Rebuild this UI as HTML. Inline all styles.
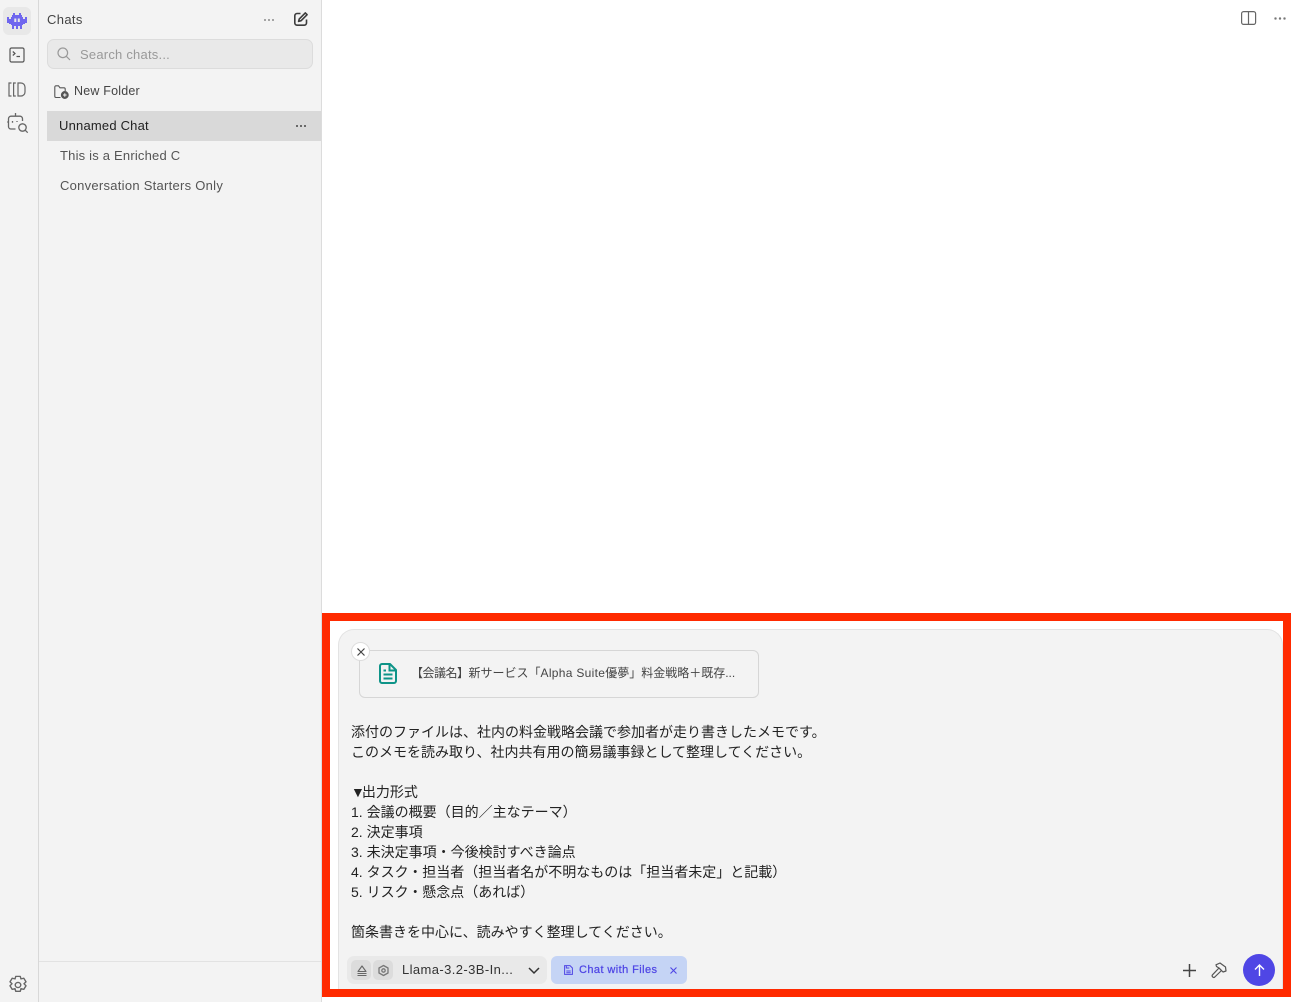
<!DOCTYPE html>
<html lang="ja"><head><meta charset="utf-8"><title>Chats</title>
<style>
html,body{margin:0;padding:0;width:1294px;height:1002px;overflow:hidden;background:#fff;font-family:"Liberation Sans","Noto Sans CJK JP",sans-serif;color:#333}
.a{position:absolute;white-space:nowrap}
svg{position:absolute;overflow:visible;fill:none}
</style></head><body>
<div class="a" style="left:0;top:0;width:38px;height:1002px;background:#f3f3f3;border-right:1px solid #d8d8d8"></div>
<div class="a" style="left:39px;top:0;width:282px;height:1002px;background:#f3f3f3;border-right:1px solid #dcdcdc"></div>
<div class="a" style="left:39px;top:961px;width:282px;height:1px;background:#e2e2e2"></div>

<div class="a" style="left:3px;top:7px;width:28px;height:28px;border-radius:6px;background:#e8e8e8"></div>
<svg style="left:7px;top:13px" width="20" height="17" viewBox="0 0 20 17"><path fill="#6f66ee" fill-rule="evenodd" d="M6 0h2v2h4V0h2v2h1v2h1v2h2V4h2v6h-2v1h-2v1h-1v4h-2v-3h-2v3H9v-3H7v3H5v-4H4v-1H2v-1H0V4h2v2h2V4h1V2h1zM7.300 5.500v3.500h2V5.500zM10.800 5.500v3.500h2V5.500z"/></svg>
<svg style="left:9px;top:47px" width="16" height="16" viewBox="0 0 16 16" stroke="#555" stroke-width="1.200"><rect x="1" y="1" width="14" height="14" rx="1.500"/><path d="M3.800 4.500 6 6.500 3.800 8.500M7.500 9.500H11"/></svg>
<svg style="left:8px;top:82px" width="18" height="15" viewBox="0 0 18 15" stroke="#666" stroke-width="1.200"><path d="M3.500 1H1v13h2.500M7.800 1H5.600v13h2.200M10 1h3a4 4 0 0 1 4 4v5a4 4 0 0 1-4 4h-3z"/></svg>
<svg style="left:7px;top:113px" width="21" height="20" viewBox="0 0 21 20" stroke="#666" stroke-width="1.300"><path d="M8.500 0v3.200M8.500 16H4a2.500 2.500 0 0 1-2.500-2.500V5.700A2.500 2.500 0 0 1 4 3.200h9a2.500 2.500 0 0 1 2.500 2.500V8"/><path d="M1.500 9H.2M5.500 8v1.800M10 8v1"/><circle cx="15.500" cy="14.500" r="3.700"/><path d="m18.200 17.200 2.500 2.500"/></svg>
<svg style="left:8.500px;top:976px" width="18" height="18" viewBox="0 0 18 18" stroke="#666" stroke-width="1.150"><g transform="translate(9 9) scale(1.250 1.150) translate(-9 -9)"><path d="M7.200 1.500h3.600l.6 2.200 2.200-.6 1.800 3.100-1.600 1.700 1.600 1.800-1.800 3.100-2.200-.6-.6 2.300H7.200l-.6-2.300-2.200.6-1.800-3.100 1.600-1.800-1.600-1.700 1.800-3.100 2.200.6z" stroke-linejoin="round"/><circle cx="9" cy="9" r="2.200"/></g></svg>

<div class="a" style="left:47px;top:12px;font-size:13px;line-height:16px;color:#444;letter-spacing:.35px">Chats</div>
<div class="a" style="left:264px;top:19px;width:11px;height:2px;background:radial-gradient(circle at 1px 1px,#8a8a8a 1px,transparent 1px) 0 0/4px 2px"></div>
<svg style="left:294px;top:12px" width="14" height="14" viewBox="0 0 14 14" stroke="#3c3c3c" stroke-width="1.600"><path d="M6.500 1.500H3A2.200 2.200 0 0 0 .8 3.700V11A2.200 2.200 0 0 0 3 13.200h7.300a2.200 2.200 0 0 0 2.200-2.200V7.500"/><path d="m11.300 .9 1.800 1.800-6 6-2.500.7.700-2.500z" stroke-linejoin="round"/></svg>

<div class="a" style="left:47px;top:39px;width:264px;height:28px;background:#e9e9e9;border:1px solid #dcdcdc;border-radius:7px"></div>
<svg style="left:57px;top:47px" width="14" height="14" viewBox="0 0 14 14" stroke="#999" stroke-width="1.200"><circle cx="5.800" cy="5.800" r="4.800"/><path d="m9.300 9.300 3.700 3.700"/></svg>
<div class="a" style="left:80px;top:47px;font-size:13px;line-height:16px;color:#999;letter-spacing:.22px">Search chats...</div>

<svg style="left:54px;top:85px" width="15" height="14" viewBox="0 0 15 14" stroke="#555" stroke-width="1.100"><path d="M6.500 12.500H2A1.200 1.200 0 0 1 .8 11.300V2A1.200 1.200 0 0 1 2 .8h2.500l1.500 2h4A1.200 1.200 0 0 1 11.200 4v2"/><circle cx="10.800" cy="10" r="3.400" fill="#555"/><path d="M9 10h3.600M10.800 8.200v3.600" stroke="#f3f3f3" stroke-width="1"/></svg>
<div class="a" style="left:74px;top:83px;font-size:12.500px;line-height:16px;color:#444;letter-spacing:.2px">New Folder</div>

<div class="a" style="left:47px;top:111px;width:274px;height:30px;background:#d9d9d9"></div>
<div class="a" style="left:59px;top:117px;font-size:13px;line-height:17px;color:#222;letter-spacing:.2px">Unnamed Chat</div>
<div class="a" style="left:296px;top:125px;width:11px;height:2px;background:radial-gradient(circle at 1px 1px,#444 1px,transparent 1px) 0 0/4px 2px"></div>
<div class="a" style="left:60px;top:147px;font-size:13px;line-height:17px;color:#555;letter-spacing:.2px">This is a Enriched C</div>
<div class="a" style="left:60px;top:177px;font-size:13px;line-height:17px;color:#555;letter-spacing:.27px">Conversation Starters Only</div>

<svg style="left:1241px;top:11px" width="15" height="14" viewBox="0 0 15 14" stroke="#666" stroke-width="1.200"><rect x=".6" y=".6" width="14" height="12.800" rx="2"/><path d="M7.500 .6v12.800"/></svg>
<div class="a" style="left:1274px;top:17px;width:12px;height:3px;background:radial-gradient(circle at 1.500px 1.500px,#777 1.200px,transparent 1.300px) 0 0/4.500px 3px"></div>

<div class="a" style="left:338px;top:629px;width:945px;height:362px;box-sizing:border-box;background:#f3f3f3;border:1px solid #e3e3e3;border-bottom:0;border-radius:16px 16px 0 0"></div>
<div class="a" style="left:322px;top:613px;width:969px;height:384px;box-sizing:border-box;border:8px solid #ff2a00"></div>

<div class="a" style="left:359px;top:650px;width:400px;height:48px;box-sizing:border-box;border:1px solid #d6d6d6;border-radius:6px;background:#f3f3f3"></div>
<div class="a" style="left:351px;top:642px;width:19px;height:19px;box-sizing:border-box;border:1px solid #ddd;border-radius:50%;background:#fff"></div>
<svg style="left:357px;top:648px" width="8" height="8" viewBox="0 0 8 8" stroke="#444" stroke-width="1.200"><path d="m.5 .5 7 7m0-7-7 7"/></svg>
<svg style="left:379px;top:663px" width="18" height="21" viewBox="0 0 18 21" stroke="#0e9488" stroke-width="2"><path d="M3 1h8l6 6v11a2 2 0 0 1-2 2H3a2 2 0 0 1-2-2V3a2 2 0 0 1 2-2z" stroke-linejoin="round"/><path d="M10.500 1v6.500H17M4.500 11.500h9M4.500 15.500h9M4.500 7.500h2.500"/></svg>
<div class="a" style="left:411px;top:665px;font-size:12px;line-height:17px;color:#444"><span style="letter-spacing:-.5px">【会議名】</span>新サービス「<span style="letter-spacing:.3px">Alpha Suite</span>優夢」料金戦略＋既存...</div>

<div class="a" style="left:351px;top:722px;font-size:14px;line-height:20px;color:#222;white-space:pre">添付のファイルは、社内の料金戦略会議で参加者が走り書きしたメモです。
このメモを読み取り、社内共有用の簡易議事録として整理してください。

<span style="letter-spacing:-3px">▼</span>出力形式
1. 会議の概要（目的／主なテーマ）
2. 決定事項
3. 未決定事項・今後検討すべき論点
4. タスク・担当者（担当者名が不明なものは「担当者未定」と記載）
5. リスク・懸念点（あれば）

箇条書きを中心に、読みやすく整理してください。</div>

<div class="a" style="left:347px;top:956px;width:200px;height:28px;border-radius:7px;background:#e9e9e9"></div>
<div class="a" style="left:351px;top:960px;width:20px;height:20px;border-radius:5px;background:#dcdcdc"></div>
<div class="a" style="left:373px;top:960px;width:20px;height:20px;border-radius:5px;background:#dcdcdc"></div>
<svg style="left:357px;top:965px" width="10" height="11" viewBox="0 0 10 11" stroke="#666" stroke-width="1.100"><path d="M5 1 1 6.500h8zM.5 8.500h9M.5 10.500h9" stroke-linejoin="round"/></svg>
<svg style="left:377.500px;top:964.500px" width="11" height="11" viewBox="0 0 11 11" stroke="#777" stroke-width="1.300"><path d="m5.500 .5 4.500 2.500v5l-4.500 2.500L1 8V3z" stroke-linejoin="round"/><circle cx="5.500" cy="5.500" r="1.700"/></svg>
<div class="a" style="left:402px;top:961px;font-size:13px;line-height:17px;color:#333;letter-spacing:.4px">Llama-3.2-3B-In...</div>
<svg style="left:528px;top:967px" width="12" height="7" viewBox="0 0 12 7" stroke="#333" stroke-width="1.500"><path d="m1 1 5 5 5-5"/></svg>

<div class="a" style="left:551px;top:956px;width:136px;height:28px;border-radius:6px;background:#c5d4f5"></div>
<svg style="left:564px;top:965px" width="9" height="10" viewBox="0 0 9 10" stroke="#4f46e5" stroke-width="1"><path d="M.6 .6h5.400l2.400 2.400v6.400H.6z"/><path d="M2.300 6h4.400M2.300 7.800h4.400M2.300 .6v2.400h3"/></svg>
<div class="a" style="left:579px;top:963px;font-size:11px;line-height:14px;color:#4f46e5;letter-spacing:.42px;-webkit-text-stroke:.25px #4f46e5">Chat with Files</div>
<svg style="left:670px;top:967px" width="7" height="7" viewBox="0 0 7 7" stroke="#4f46e5" stroke-width="1.100"><path d="m.5 .5 6 6m0-6-6 6"/></svg>

<svg style="left:1183px;top:964px" width="13" height="13" viewBox="0 0 13 13" stroke="#444" stroke-width="1.500"><path d="M6.500 0v13M0 6.500h13"/></svg>
<svg style="left:1211px;top:962px" width="17" height="17" viewBox="0 0 17 17" stroke="#555" stroke-width="1.200" stroke-linejoin="round"><path d="M1.500 12.800 8 6l2.500 2.500L3.800 15a1.600 1.600 0 0 1-2.300-2.200z"/><path d="M5 2.800 9 1l5.500 4 .5 4-3 1-1.500-1.500L8 6 5.500 4.500z"/></svg>
<div class="a" style="left:1243px;top:954px;width:32px;height:32px;border-radius:50%;background:#4f46e5"></div>
<svg style="left:1254px;top:964px" width="11" height="12" viewBox="0 0 11 12" stroke="#fff" stroke-width="1.400"><path d="M5.500 12V1M1 5.500l4.500-4.500 4.500 4.500"/></svg>
</body></html>
